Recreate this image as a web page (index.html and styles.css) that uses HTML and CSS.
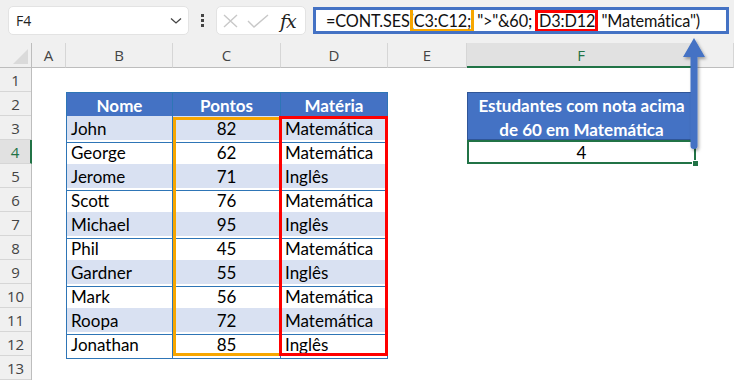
FILE: index.html
```html
<!DOCTYPE html>
<html>
<head>
	<meta charset="UTF-8">
	<title>CONT.SES</title>
	<link rel="stylesheet" href="styles.css">
</head>
<body>
<div class="app">
	<div class="toolbar">
		<div class="namebox">
			<span>F4</span>
			<svg class="chev" width="12" height="8" viewBox="0 0 12 8"><path d="M1 1.5 L6 6 L11 1.5" fill="none" stroke="#444" stroke-width="1.3"/></svg>
		</div>
		<div class="dots"><i></i><i></i><i></i></div>
		<div class="fxbox">
			<svg width="17" height="14" viewBox="0 0 17 14"><path d="M2 1 L15 13 M15 1 L2 13" stroke="#c8c8c8" stroke-width="1.4" fill="none"/></svg>
			<svg width="22" height="14" viewBox="0 0 22 14"><path d="M1 7 L7 13 L21 1" stroke="#c8c8c8" stroke-width="1.4" fill="none"/></svg>
			<span class="fx">fx</span>
		</div>
		<div class="formula">=CONT.SES(<span class="ref ref-c">C3:C12;</span> "&gt;"&amp;60; <span class="ref ref-d">D3:D12</span><span class="under">;</span> "Matemática")</div>
	</div>

	<div class="sheet">
		<div class="corner"><b></b></div>
		<div class="colhead">A</div>
		<div class="colhead">B</div>
		<div class="colhead">C</div>
		<div class="colhead">D</div>
		<div class="colhead">E</div>
		<div class="colhead sel">F</div>
		<div class="colhead"></div>

		<div class="rowheads">
			<div>1</div><div>2</div><div>3</div><div class="sel">4</div><div>5</div><div>6</div><div>7</div>
			<div>8</div><div>9</div><div>10</div><div>11</div><div>12</div><div>13</div>
		</div>

		<div class="data">
			<div class="row head"><div>Nome</div><div>Pontos</div><div>Matéria</div></div>
			<div class="row"><div>John</div><div>82</div><div>Matemática</div></div>
			<div class="row"><div>George</div><div>62</div><div>Matemática</div></div>
			<div class="row"><div>Jerome</div><div>71</div><div>Inglês</div></div>
			<div class="row"><div>Scott</div><div>76</div><div>Matemática</div></div>
			<div class="row"><div>Michael</div><div>95</div><div>Inglês</div></div>
			<div class="row"><div>Phil</div><div>45</div><div>Matemática</div></div>
			<div class="row"><div>Gardner</div><div>55</div><div>Inglês</div></div>
			<div class="row"><div>Mark</div><div>56</div><div>Matemática</div></div>
			<div class="row"><div>Roopa</div><div>72</div><div>Matemática</div></div>
			<div class="row"><div>Jonathan</div><div>85</div><div>Inglês</div></div>
		</div>

		<!-- ranges picked out by the formula -->
		<div class="range range-c"></div>
		<div class="range range-d"></div>

		<div class="stat-head">Estudantes com nota acima<br>de 60 em Matemática</div>
		<div class="stat-value">4<i class="handle"></i></div>
	</div>

	<svg class="arrow" width="40" height="124" viewBox="0 0 40 124">
		<defs>
			<filter id="sh" x="-50%" y="-20%" width="200%" height="140%">
				<feDropShadow dx="1.5" dy="2" stdDeviation="1.5" flood-color="#000" flood-opacity="0.35"/>
			</filter>
		</defs>
		<path d="M16 4 L27 23 L19.5 23 L19.5 112 Q19.5 115 16 115 Q12.5 115 12.5 112 L12.5 23 L5 23 Z" fill="#4472c4" filter="url(#sh)"/>
	</svg>
</div>
</body>
</html>
```

FILE: styles.css
```css
*{
	box-sizing: border-box;
}
body{
	margin: 0;
	background: #fff;
	font-family: Lato, "Liberation Sans", sans-serif;
	overflow: hidden;
}
.app{
	position: relative;
	width: 734px;
	height: 380px;
}

/* top bar: name box, fx buttons, formula */
.toolbar{
	height: 43px;
	background: #f0f0f0;
	display: flex;
	align-items: flex-start;
	padding: 6px 0 0 8px;
}
.namebox{
	width: 181px;
	height: 29px;
	background: #fff;
	border: 1px solid #e3e3e3;
	border-radius: 5px;
	display: flex;
	align-items: center;
	justify-content: space-between;
	padding: 0 6px 0 7px;
	font-family: "Open Sans", sans-serif;
	font-size: 14px;
	color: #222;
}
.dots{
	width: 27px;
	height: 29px;
	display: flex;
	flex-direction: column;
	align-items: center;
	justify-content: center;
	gap: 2px;
}
.dots i{
	width: 3px;
	height: 3px;
	background: #444;
}
.fxbox{
	width: 90px;
	height: 29px;
	background: #fff;
	border: 1px solid #e3e3e3;
	border-radius: 5px;
	display: flex;
	align-items: center;
	padding: 0 5px 0 5px;
	gap: 8px;
}
.fx{
	margin-left: 3px;
	font-family: "DejaVu Serif", "Liberation Serif", serif;
	font-style: italic;
	font-size: 19px;
	color: #222;
	letter-spacing: -1px;
}
.formula{
	margin: 1px 0 0 7px;
	width: 416px;
	height: 27px;
	border: 3px solid #4472c4;
	background: #fff;
	padding: 0 0 0 10px;
	font-size: 16.3px;
	letter-spacing: -0.15px;
	word-spacing: -1px;
	line-height: 21px;
	color: #111;
	white-space: nowrap;
	overflow: hidden;
}
.ref{
	display: inline-block;
	vertical-align: top;
	border: 3px solid;
}
.ref-c{
	border-color: #f7a600;
	margin: -3px 0 -1px -4px;
	height: 25px;
	line-height: 19px;
	padding: 1px 0 0 1px;
}
.ref-d{
	border-color: #f00;
	height: 22px;
	line-height: 14px;
	padding: 0.5px 0 0 1px;
}
/* the semicolon sits under the red frame */
.under{
	position: relative;
	z-index: -1;
	margin-left: -4px;
}

/* worksheet */
.sheet{
	display: grid;
	grid-template-columns: 32px 34px 107px 108px 107px 79px 229px 1fr;
	grid-template-rows: 25px repeat(13, 24px);
	font-family: "Open Sans", sans-serif;
}
.corner{
	background: #f0f0f0;
	border-right: 1px solid #bdbdbd;
	border-bottom: 1px solid #bdbdbd;
	position: relative;
}
.corner b{
	position: absolute;
	right: 3px;
	bottom: 3px;
	border-style: solid;
	border-width: 0 0 15px 15px;
	border-color: transparent transparent #dadada transparent;
}
.colhead{
	background: #f0f0f0;
	border-right: 1px solid #d6d6d6;
	border-bottom: 1px solid #bdbdbd;
	text-align: center;
	font-size: 15px;
	line-height: 24px;
	color: #444;
}
.colhead.sel{
	background: #e1e1e1;
	border-bottom: 2px solid #217346;
	color: #217346;
}
.rowheads{
	grid-column: 1;
	grid-row: 2 / 15;
	display: flex;
	flex-direction: column;
	background: #f0f0f0;
	border-right: 1px solid #bdbdbd;
}
.rowheads div{
	height: 24px;
	border-bottom: 1px solid #d6d6d6;
	text-align: center;
	font-size: 15px;
	line-height: 24px;
	color: #444;
}
.rowheads div.sel{
	background: #e1e1e1;
	color: #217346;
	margin-right: -1px;
	border-right: 2px solid #217346;
}

/* data table B2:D12 */
.data{
	grid-column: 3 / 6;
	grid-row: 3 / 14;
	display: flex;
	flex-direction: column;
	font-family: Lato, sans-serif;
	font-size: 17px;
	color: #000;
}
.row{
	display: grid;
	grid-template-columns: 107px 108px 107px;
	height: 24px;
}
.row div{
	border-right: 1px solid #2e75b6;
	border-bottom: 1px solid #2e75b6;
	line-height: 26px;
	padding-left: 4px;
	white-space: nowrap;
}
.row div:first-child{
	border-left: 1px solid #2e75b6;
}
.row div:nth-child(2){
	text-align: center;
	padding-left: 0;
}
.row:nth-child(even){
	background: #d9e1f2;
}
.row.head{
	background: #4472c4;
	color: #fff;
	font-weight: bold;
}
.row.head div{
	border-top: 1px solid #2e75b6;
	text-align: center;
	padding-left: 0;
}
.range{
	border: 3px solid;
	z-index: 2;
}
.range-c{
	grid-column: 4;
	grid-row: 4 / 14;
	border-color: #f7a600;
	margin: 1px -1px 0 0;
}
.range-d{
	grid-column: 5;
	grid-row: 4 / 14;
	border-color: #f00;
	margin-left: -2px;
}

/* result block F2:F4 */
.stat-head{
	grid-column: 7;
	grid-row: 3 / 5;
	background: #4472c4;
	border: 1px solid #2f5597;
	color: #fff;
	font-family: Lato, sans-serif;
	font-weight: bold;
	font-size: 17px;
	line-height: 24px;
	text-align: center;
	padding-top: 1px;
}
.stat-value{
	grid-column: 7;
	grid-row: 5;
	position: relative;
	border: 2px solid #217346;
	font-family: Lato, sans-serif;
	font-size: 17px;
	line-height: 22px;
	text-align: center;
}
.handle{
	position: absolute;
	right: -5px;
	bottom: -5px;
	width: 7px;
	height: 7px;
	background: #217346;
	border: 1px solid #fff;
}
.arrow{
	position: absolute;
	left: 678px;
	top: 34px;
	z-index: 5;
}
```
